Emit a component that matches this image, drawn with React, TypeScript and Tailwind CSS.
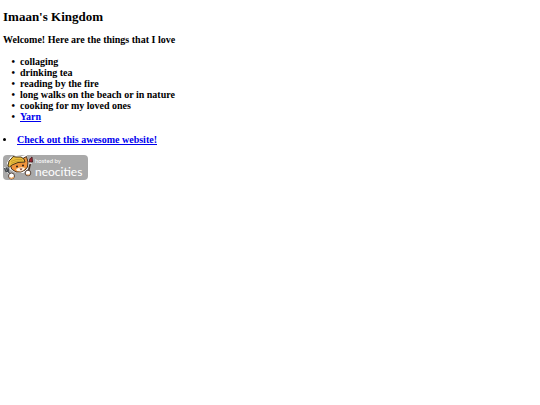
import React from 'react'

const loves = [
  'collaging',
  'drinking tea',
  'reading by the fire',
  'long walks on the beach or in nature',
  'cooking for my loved ones',
]

const Cat = (): React.ReactElement => {
  return (
    <svg viewBox="0 0 32 26" className="h-[26px] w-8 shrink-0" aria-hidden="true">
      {/* white sticker outline */}
      <g fill="#fff" stroke="#fff" strokeWidth="2" strokeLinejoin="round" strokeLinecap="round">
        <path d="M5 8 8 3 13 1 19 2 23 1 25 7 24 13 20 17 13 17 8 14Z" />
        <path d="M2 13 9 22M28 3 25 18" />
      </g>
      {/* head */}
      <path
        d="M7 8 12 5 19 4 23.5 1.5 25 7 24.5 12 22 15 18 17 13 17 8.5 14Z"
        fill="#f0943c"
        stroke="#3d2a1b"
        strokeWidth="1"
        strokeLinejoin="round"
      />
      <path d="M13 14Q18 11 22 13L21 15 18 16.5 14 16Z" fill="#fff1dd" />
      {/* hat */}
      <path
        d="M5 11 6 6 9 3 10 1.5 13 2 18 2 21 4 22 7 15 7.5 9 10 6.5 12Z"
        fill="#ecbf3f"
        stroke="#4c3919"
        strokeWidth="1"
        strokeLinejoin="round"
      />
      <path d="M8 6.5Q13 3.5 19 4.5M8 8.5Q13 5.5 20 6" fill="none" stroke="#b08a22" strokeWidth=".6" />
      <circle cx="14" cy="11.5" r="1" fill="#2c1c14" />
      <circle cx="20" cy="10.5" r="1" fill="#2c1c14" />
      <path d="M16.5 13.5H19.5L18 15.5Z" fill="#7c3026" />
      {/* fork and left paw */}
      <path
        d="M1.5 13 3 16.5 5.5 16 5 12.5M3 12.5 4.5 16 8 20"
        fill="none"
        stroke="#454a50"
        strokeWidth="1.3"
      />
      <circle cx="8.5" cy="21" r="3" fill="#fff" stroke="#49362a" strokeWidth=".9" />
      <path d="M6.5 22.5Q8.5 24.5 11 22" fill="none" stroke="#eba55f" strokeWidth="1.1" />
      {/* brush and right paw */}
      <path d="M27.5 8 25.5 16" stroke="#49362a" strokeWidth="1.8" />
      <path d="M26 7 27 3.5 29 2 29.5 7Z" fill="#a32733" stroke="#45191e" strokeWidth=".9" />
      <path d="M26 8.5H29" stroke="#d8d8d8" strokeWidth="1.2" />
      <circle cx="25" cy="18" r="2.8" fill="#fff" stroke="#49362a" strokeWidth=".9" />
      <path d="M23.5 19.5Q25 21 27 19" fill="none" stroke="#eba55f" />
    </svg>
  )
}

const App = (): React.ReactElement => {
  return (
    <main className="px-[3px] pt-2 font-['Liberation_Serif',serif] text-[10px] leading-[11px] font-bold text-black">
      <h1 className="text-[13px] leading-[18px]">Imaan's Kingdom</h1>
      <h2 className="mt-2">Welcome! Here are the things that I love</h2>
      <ul className="mt-[11px] list-['•__'] pl-[17px]">
        {loves.map((item) => (
          <li key={item}>{item}</li>
        ))}
        <li>
          <a href="#yarn" className="text-[#0000ee] underline">
            Yarn
          </a>
        </li>
      </ul>
      <ul className="mt-3 list-inside list-disc">
        <li>
          <a href="#website" className="text-[#0000ee] underline">
            Check out this awesome website!
          </a>
        </li>
      </ul>
      <a
        href="#neocities"
        className="mt-[10px] flex h-[25px] w-[85px] items-center rounded-sm bg-[#a9a9a9] font-['Lato',sans-serif] font-normal text-white"
      >
        <Cat />
        <span className="flex flex-col">
          <span className="text-[6px] leading-[8px]">hosted by</span>
          <span className="text-[12px] leading-[13px]">neocities</span>
        </span>
      </a>
    </main>
  )
}

export default App
